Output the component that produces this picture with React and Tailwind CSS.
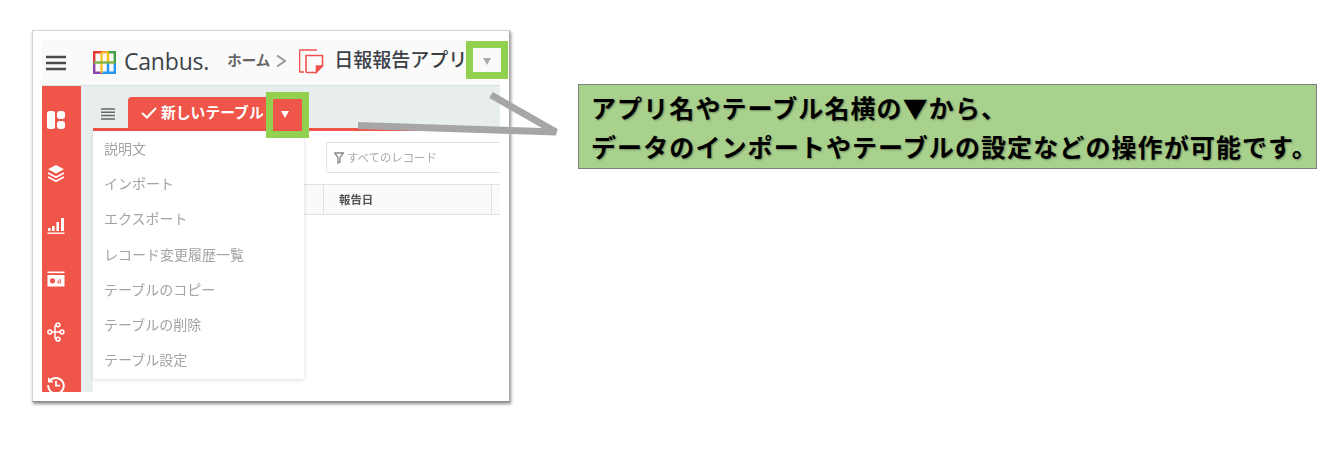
import React from "react";

const JP = "[font-family:'Noto_Sans_CJK_JP','Noto_Sans',sans-serif]";

function Hamburger() {
  return (
    <svg width="20" height="16" viewBox="0 0 20 16" className="text-[#4a4a4a]">
      <path d="M0 2h20M0 8h20M0 14h20" stroke="currentColor" strokeWidth="2.4" />
    </svg>
  );
}

function Logo() {
  return (
    <svg width="23" height="23" viewBox="0 0 23 23" fill="none" strokeWidth="2.4">
      <path d="M1.2 12V1.2H9" stroke="#e53935" />
      <path d="M9 1.2h6" stroke="#f4a62a" />
      <path d="M15 1.2h6.8V12" stroke="#43a047" />
      <path d="M1.2 12v9.8H9" stroke="#8e44ad" />
      <path d="M9 21.8h12.8V12" stroke="#2196f3" />
      <path d="M8.5 1v21" stroke="#fbc02d" />
      <path d="M15 1v10" stroke="#f4c20d" />
      <path d="M15 12v10" stroke="#2196f3" />
      <path d="M1 11.5h21" stroke="#7cb342" />
    </svg>
  );
}

function AppIcon() {
  return (
    <svg width="25" height="25" viewBox="0 0 25 25" fill="none" stroke="#ef5350" strokeWidth="1.6">
      <path d="M5 23H1.5a1 1 0 0 1-1-1V2a1 1 0 0 1 1-1H18" />
      <path d="M7 6.5h16.5V17l-6.5 6.5H8a1 1 0 0 1-1-1z" />
      <path d="M23 17h-5.5v6z" fill="#ef5350" />
    </svg>
  );
}

function Caret({ color }) {
  return (
    <svg width="8" height="7" viewBox="0 0 8 7">
      <path d="M0 0h8L4 7z" fill={color} />
    </svg>
  );
}

function DashIcon() {
  return (
    <svg width="20" height="20" viewBox="0 0 20 20" fill="white">
      <rect x="1" y="1" width="8" height="18" rx="2.5" />
      <rect x="11" y="1" width="8" height="8" rx="3" />
      <rect x="11" y="11" width="8" height="8" rx="3" />
    </svg>
  );
}

function LayersIcon() {
  return (
    <svg width="18" height="19" viewBox="0 0 18 19" fill="white">
      <path d="M9 1l8 4.2-8 4.2-8-4.2z" />
      <path d="M1.5 8.2L9 12.2l7.5-4 .8 1.6L9 14.2.7 9.8z" />
      <path d="M1.5 12.2L9 16.2l7.5-4 .8 1.6L9 18.2.7 13.8z" />
    </svg>
  );
}

function BarsIcon() {
  return (
    <svg width="18" height="18" viewBox="0 0 18 18" fill="white">
      <rect x="1" y="11" width="2.6" height="3" />
      <rect x="5" y="9" width="2.6" height="5" />
      <rect x="9.4" y="5" width="2.6" height="9" />
      <rect x="14" y="1" width="3" height="13" />
      <rect x="0.5" y="15.5" width="17" height="1.4" />
    </svg>
  );
}

function CardIcon() {
  return (
    <svg width="18" height="16" viewBox="0 0 18 16">
      <rect x="0.5" y="0.5" width="17" height="1.6" fill="white" />
      <rect x="0.5" y="4" width="17" height="11.5" fill="white" />
      <circle cx="5.5" cy="9.8" r="2.6" fill="#ef5350" />
      <rect x="10.5" y="9.5" width="1.2" height="3" fill="#ef5350" />
      <rect x="12.6" y="8" width="1.2" height="4.5" fill="#ef5350" />
    </svg>
  );
}

function ShareIcon() {
  return (
    <svg width="18" height="20" viewBox="0 0 18 20" fill="none" stroke="white" strokeWidth="1.5">
      <circle cx="2.8" cy="10" r="1.9" />
      <circle cx="11" cy="2.8" r="1.9" />
      <circle cx="15" cy="10" r="1.9" />
      <circle cx="11" cy="17.2" r="1.9" />
      <path d="M4.7 10h8.4M8 10V4.5a1.7 1.7 0 0 1 1.2-1.7M8 10v5.5a1.7 1.7 0 0 0 1.2 1.7" />
    </svg>
  );
}

function HistoryIcon() {
  return (
    <svg width="18" height="18" viewBox="0 0 18 18" fill="none" stroke="white" strokeWidth="2">
      <path d="M2.4 5.5A7.8 7.8 0 1 1 1.2 9" />
      <path d="M1.8 1.8v4h4" strokeWidth="1.6" />
      <path d="M9 4.8V9.6h4" strokeWidth="1.8" />
    </svg>
  );
}

const menuItems = [
  "説明文",
  "インポート",
  "エクスポート",
  "レコード変更履歴一覧",
  "テーブルのコピー",
  "テーブルの削除",
  "テーブル設定",
];

const sideIcons = [DashIcon, LayersIcon, BarsIcon, CardIcon, ShareIcon, HistoryIcon];

export default function App() {
  return (
    <div className={`relative flex h-[473px] w-[1328px] items-start overflow-hidden bg-white pl-8 pt-[30px] ${JP}`}>
      {/* screenshot card */}
      <div className="relative h-[372px] w-[478px] shrink-0 border border-[#d4d4d4] border-r-[#a8a8a8] border-b-[#8c8c8c] bg-white pt-[9px] pr-[9px] pb-[9px] pl-[9px] shadow-[1px_2px_3px_rgba(0,0,0,0.45)]">
        <div className="flex h-full flex-col overflow-hidden blur-[0.3px]">
          {/* header */}
          <div className="flex h-[46px] shrink-0 items-center border-b border-[#dbe2e2] bg-[#fafafa] pl-1">
            <Hamburger />
            <div className="ml-[27px] mt-[-1px]"><Logo /></div>
            <span className="ml-[8px] mt-[-2px] text-[23px] leading-none tracking-[-0.2px] text-[#3c4448] [font-family:'Open_Sans',sans-serif]">
              Canbus.
            </span>
            <span className="ml-[18px] mt-[-5px] text-[14.5px] font-bold text-[#666]">ホーム</span>
            <svg width="12" height="14" viewBox="0 0 12 14" fill="none" className="ml-[5px] mt-[-3px]">
              <path d="M2 1.5l8 5.5-8 5.5" stroke="#999" strokeWidth="2" />
            </svg>
            <div className="ml-3 mt-[-2px]"><AppIcon /></div>
            <span className="ml-[10px] mt-[-6px] text-[19px] font-medium text-[#3a4045]">日報報告アプリ</span>
            <div className="ml-4 mt-[-3px] flex"><Caret color="#aaaaaa" /></div>
          </div>

          <div className="flex min-h-0 flex-1">
            {/* sidebar */}
            <div className="flex w-[39px] shrink-0 flex-col items-center gap-[33px] overflow-hidden bg-[#ef5549] pr-3 pt-[24px]">
              {sideIcons.map((Icon, i) => (
                <div key={i} className="flex h-5 shrink-0 items-center justify-center">
                  <Icon />
                </div>
              ))}
            </div>
            <div className="w-3 shrink-0 bg-[#e8eeee]" />

            {/* main */}
            <div className="flex min-w-0 flex-1 flex-col">
              {/* tab bar */}
              <div className="flex h-[45px] shrink-0 items-end border-b-[3px] border-[#ef5549] bg-[#e8eeee]">
                <div className="mb-[8px] ml-2 text-[#666]">
                  <svg width="14" height="12" viewBox="0 0 14 12">
                    <path d="M0 1h14M0 4.3h14M0 7.6h14M0 11h14" stroke="#666" strokeWidth="1.5" />
                  </svg>
                </div>
                <div className="ml-[13px] flex h-[31px] w-[175px] items-center rounded-t-[4px] bg-[#ef5549] pl-[13px]">
                  <svg width="16" height="12" viewBox="0 0 16 12" fill="none">
                    <path d="M1 6l5 4.5L15 1" stroke="white" strokeWidth="2" />
                  </svg>
                  <span className="ml-1 whitespace-nowrap text-[14.8px] font-bold text-white">新しいテーブル</span>
                  <div className="ml-[17px] mt-[4px] flex"><Caret color="white" /></div>
                </div>
              </div>

              {/* content */}
              <div className="flex flex-1 flex-col pt-[11px]">
                <div className="ml-[233px] flex h-[31px] items-center rounded-l-[2px] border border-r-0 border-[#e2e2e2] pl-[7px]">
                  <svg width="10" height="12" viewBox="0 0 10 12" fill="none">
                    <path d="M0.7 1h8.6L6 5.5V10L4 11V5.5z" stroke="#888" strokeWidth="1.3" />
                  </svg>
                  <span className="ml-[3px] text-[11.4px] text-[#aaa]">すべてのレコード</span>
                </div>
                <div className="mt-[11px] flex h-[31px] border-y border-[#e2e2e2] bg-[#fafafa]">
                  <div className="w-[231px] border-r border-[#e2e2e2]" />
                  <div className="flex w-[168px] items-center border-r border-[#e2e2e2] pl-[15px] text-[11.4px] font-bold text-[#555]">
                    報告日
                  </div>
                </div>
              </div>
            </div>
          </div>
        </div>

        {/* dropdown menu */}
        <div className="absolute left-[60px] top-[100px] flex h-[248px] w-[211px] flex-col bg-white shadow-[0_1px_4px_rgba(0,0,0,0.14)]">
          {menuItems.map((item) => (
            <div key={item} className="flex h-[35.2px] shrink-0 items-center pl-[11px] text-[14px] text-[#a3a3a3] blur-[0.3px]">
              {item}
            </div>
          ))}
        </div>

        {/* green highlight frames */}
        <div className="absolute left-[433px] top-[10px] h-[38px] w-[42px] border-[7px] border-[#92d050]" />
        <div className="absolute left-[233px] top-[61px] h-[46px] w-[43px] border-[7px] border-[#92d050]" />
      </div>

      {/* callout */}
      <div className="ml-[68px] mt-[54px] h-[85px] w-[739px] shrink-0 border border-[#7f7f7f] bg-[#a9d18e] pl-3 pt-[3px] text-[25px] font-bold leading-[39px] tracking-[1.1px] text-black [text-shadow:1px_1px_2px_rgba(0,0,0,0.35)]">
        <div className="whitespace-nowrap">アプリ名やテーブル名横の▼から、</div>
        <div className="whitespace-nowrap">データのインポートやテーブルの設定などの操作が可能です。</div>
      </div>

      {/* connector */}
      <svg className="pointer-events-none absolute left-0 top-0" width="600" height="160" fill="none">
        <path d="M491 95L556 132L358 125.5" stroke="#a6a6a6" strokeWidth="7" strokeLinejoin="miter" />
      </svg>
    </div>
  );
}
